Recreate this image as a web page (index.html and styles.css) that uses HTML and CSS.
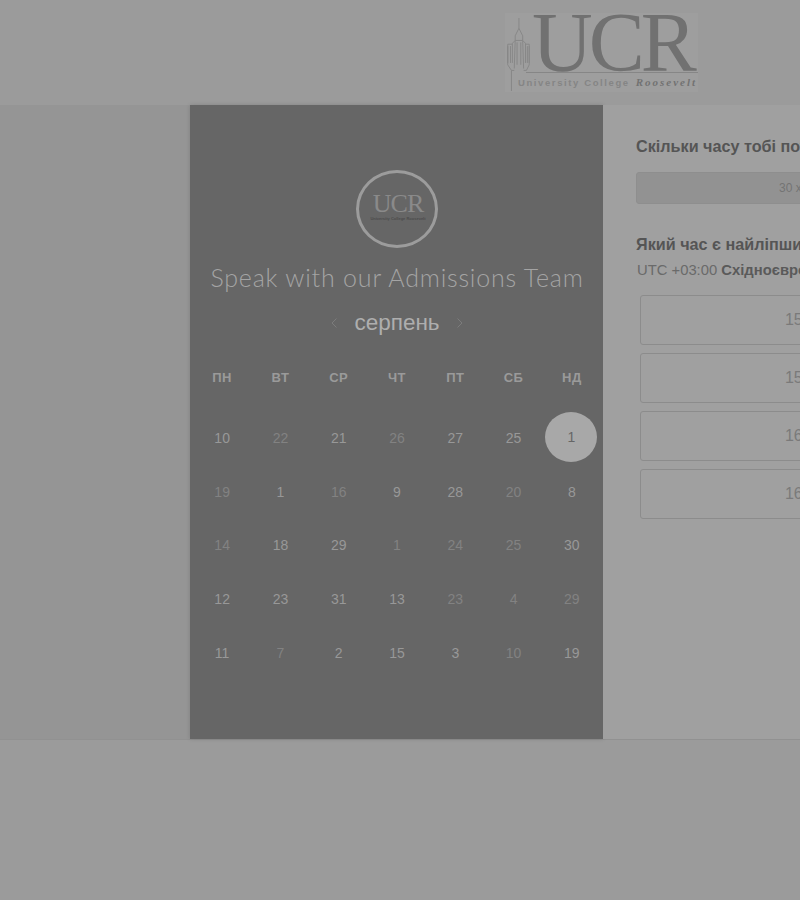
FILE: index.html
```html
<!DOCTYPE html>
<html lang="uk">
<head>
<meta charset="utf-8">
<title>Speak with our Admissions Team</title>
<link rel="stylesheet" href="styles.css">
</head>
<body>
<header class="top">
  <div class="logo">
    <svg class="tower" viewBox="0 0 26 78" width="26" height="73" fill="none" stroke="#868686" stroke-width="1">
      <path d="M14 0V11M14 11L10 19V24L7 27V48M14 11L18 19V24L21 27V48M10 24H18M10 24L9 54M18 24L19 54M12 26V50M16 26V50M7 28H2V50L6 56H9M21 28H25V50L22 56H19M2 30V48M25 30V48M5 30V48M23 30V48M6 56V78"/>
    </svg>
    <div class="logo-body">
      <div class="logo-ucr">UCR</div>
      <div class="logo-sub"><span class="logo-uni">University College</span><span class="logo-roos">Roosevelt</span></div>
    </div>
  </div>
</header>
<main class="band">
  <div class="side"></div>
  <section class="panel">
    <div class="badge">
      <div class="badge-ucr">UCR</div>
      <div class="badge-sub">University College Roosevelt</div>
    </div>
    <h1 class="title">Speak with our Admissions Team</h1>
    <div class="month">
      <svg class="chev" viewBox="0 0 8 12" width="8" height="12" fill="none" stroke="#7c7c7c" stroke-width="1"><path d="M6.5 1.5L2 6l4.500 4.500"/></svg>
      <span class="month-name">серпень</span>
      <svg class="chev" viewBox="0 0 8 12" width="8" height="12" fill="none" stroke="#7c7c7c" stroke-width="1"><path d="M1.500 1.500L6 6l-4.500 4.500"/></svg>
    </div>
    <div class="weekdays">
      <span>ПН</span><span>ВТ</span><span>СР</span><span>ЧТ</span><span>ПТ</span><span>СБ</span><span>НД</span>
    </div>
    <div class="dates">
      <span>10</span><span class="dim">22</span><span>21</span><span class="dim">26</span><span>27</span><span>25</span><span><b class="sel">1</b></span>
      <span class="dim">19</span><span>1</span><span class="dim">16</span><span>9</span><span>28</span><span class="dim">20</span><span>8</span>
      <span class="dim">14</span><span>18</span><span>29</span><span class="dim">1</span><span class="dim">24</span><span class="dim">25</span><span>30</span>
      <span>12</span><span>23</span><span>31</span><span>13</span><span class="dim">23</span><span class="dim">4</span><span class="dim">29</span>
      <span>11</span><span class="dim">7</span><span>2</span><span>15</span><span>3</span><span class="dim">10</span><span>19</span>
    </div>
  </section>
  <section class="right">
    <h2 class="q">Скільки часу тобі потрібно?</h2>
    <div class="duration">30 хвилин</div>
    <h2 class="q q2">Який час є найліпшим?</h2>
    <p class="tz">UTC +03:00 <b>Східноєвропейський час</b></p>
    <div class="slots">
      <div class="slot">15:00</div>
      <div class="slot">15:30</div>
      <div class="slot">16:00</div>
      <div class="slot">16:30</div>
    </div>
  </section>
</main>
</body>
</html>
```

FILE: styles.css
```css
* { box-sizing: border-box; }
html, body { margin: 0; height: 100%; }
body {
  width: 800px;
  height: 900px;
  overflow: hidden;
  background: #9b9b9b;
  font-family: "Liberation Sans", Arial, sans-serif;
}
.top {
  height: 105px;
  padding: 13px 102px 0 0;
  display: flex;
  justify-content: flex-end;
  align-items: flex-start;
}
.logo {
  position: relative;
  width: 193px;
  height: 79px;
  background: #9e9e9e;
  padding: 0 0 0 13px;
}
.tower { position: absolute; left: 0; top: 5px; }
.logo-body {
  display: flex;
  flex-direction: column;
}
.logo-ucr {
  font-family: "Liberation Serif", serif;
  font-size: 84px;
  line-height: 60px;
  height: 60px;
  letter-spacing: -4px;
  color: #717171;
  padding: 0 0 0 6px;
  white-space: nowrap;
  border-bottom: 1px solid #868686;
  margin-left: 8px;
}
.logo-sub {
  display: flex;
  align-items: baseline;
  gap: 6px;
  margin-top: 3px;
  white-space: nowrap;
}
.logo-uni {
  font-size: 9.500px;
  font-weight: 700;
  letter-spacing: 1.600px;
  color: #858585;
}
.logo-roos {
  font-family: "Liberation Serif", serif;
  font-style: italic;
  font-weight: 700;
  font-size: 11px;
  letter-spacing: 2px;
  color: #727272;
}
.band {
  height: 635px;
  display: flex;
  background: #959595;
  border-bottom: 1px solid #919191;
}
.side { width: 190px; flex: none; }
.panel {
  width: 413px;
  flex: none;
  background: #666666;
  padding: 65px 2px 0 3px;
  display: flex;
  flex-direction: column;
  align-items: center;
  box-shadow: 0 0 4px rgba(0,0,0,.15);
}
.badge {
  width: 82px;
  height: 78px;
  border: 3px solid #9c9c9c;
  border-radius: 50%;
  display: flex;
  flex-direction: column;
  align-items: center;
  padding: 19px 0 0 2px;
}
.badge-ucr {
  font-family: "Liberation Serif", serif;
  font-size: 26px;
  line-height: 24px;
  letter-spacing: -1px;
  color: #8a8a8a;
}
.badge-sub {
  font-size: 4px;
  line-height: 5px;
  color: #4c4c4c;
  white-space: nowrap;
  font-weight: 700;
}
.title {
  margin: 12px 0 0;
  font-family: Lato, "Liberation Sans", sans-serif;
  font-weight: 300;
  font-size: 25px;
  line-height: 34px;
  letter-spacing: .8px;
  color: #a4a4a4;
  white-space: nowrap;
}
.month {
  margin-top: 13px;
  height: 32px;
  display: flex;
  align-items: center;
  gap: 16px;
}
.month-name {
  font-size: 22.500px;
  color: #aeaeae;
}
.weekdays, .dates {
  width: 100%;
  display: grid;
  grid-template-columns: repeat(7, 1fr);
  justify-items: center;
  text-align: center;
}
.weekdays {
  margin-top: 30px;
  font-size: 13px;
  font-weight: 700;
  letter-spacing: .4px;
  line-height: 18px;
  color: #9a9a9a;
}
.dates {
  margin-top: 24px;
  grid-auto-rows: 53.750px;
  align-items: center;
  font-size: 14px;
  color: #989898;
}
.dates .dim { color: #828282; }
.sel {
  display: flex;
  align-items: center;
  justify-content: center;
  width: 52px;
  height: 50px;
  border-radius: 50%;
  background: #a8a8a8;
  color: #666666;
  font-weight: 400;
  margin: -2px 1px 0 0;
}
.right {
  width: 380px;
  flex: none;
  background: #a0a0a0;
  padding: 32px 0 0 33px;
}
.q {
  margin: 0;
  font-size: 16.200px;
  line-height: 18px;
  font-weight: 700;
  color: #555555;
  white-space: nowrap;
}
.duration {
  margin-top: 17px;
  height: 32px;
  width: 342px;
  border: 1px solid #8e8e8e;
  border-radius: 3px;
  background: #929292;
  display: flex;
  align-items: center;
  justify-content: center;
  font-size: 12px;
  color: #747474;
}
.q2 { margin-top: 31px; }
.tz {
  margin: 8px 0 0 1px;
  font-size: 14.800px;
  line-height: 18px;
  color: #6a6a6a;
  white-space: nowrap;
}
.tz b { color: #5a5a5a; }
.slots {
  margin: 16px 0 0 4px;
  display: flex;
  flex-direction: column;
  gap: 8.500px;
  width: 330px;
}
.slot {
  height: 49.500px;
  border: 1px solid #8c8c8c;
  border-radius: 3px;
  display: flex;
  align-items: center;
  justify-content: center;
  font-size: 16px;
  color: #7a7a7a;
}
```
